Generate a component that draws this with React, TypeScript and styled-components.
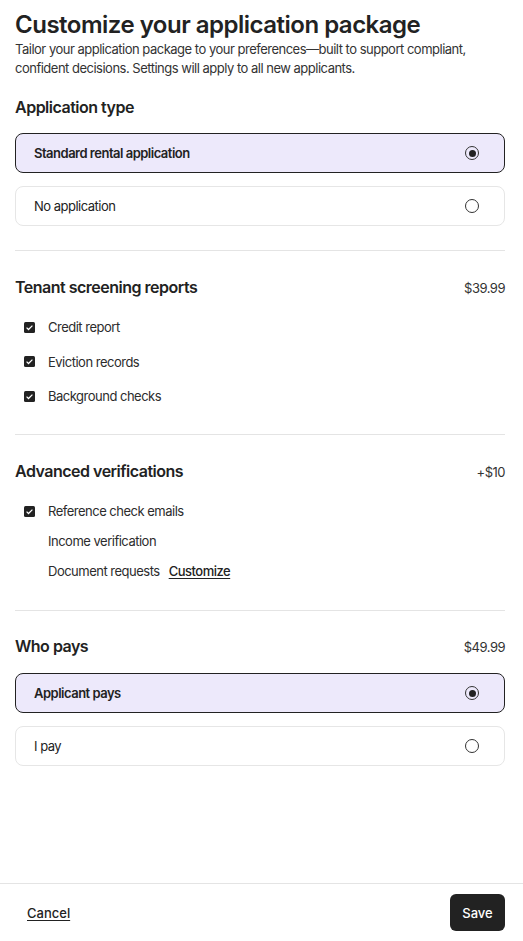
import styled, { createGlobalStyle } from "styled-components";

const GlobalStyle = createGlobalStyle`
  html, body {
    margin: 0;
    padding: 0;
    background: #fff;
  }
  body {
    font-family: Inter, "Noto Sans", sans-serif;
    color: #222;
    letter-spacing: -0.5px;
  }
`;

const Page = styled.div`
  display: flex;
  flex-direction: column;
  min-height: 100vh;
`;

const Content = styled.main`
  flex: 1;
  padding: 10px 18px 0 15px;
`;

const Title = styled.h1`
  margin: 0;
  font-size: 24px;
  line-height: 30px;
  font-weight: 600;
  color: #222;
`;

const Intro = styled.p`
  margin: 0;
  font-size: 13px;
  line-height: 19px;
  color: #333;
`;

const Section = styled.section<{ $top?: number; $bottom?: number }>`
  padding: ${(p) => p.$top ?? 25}px 0 ${(p) => p.$bottom ?? 24}px;
  border-bottom: 1px solid #e4e4e4;

  &:last-child {
    border-bottom: none;
  }
`;

const SectionHead = styled.div<{ $space?: number }>`
  display: flex;
  justify-content: space-between;
  align-items: baseline;
  margin-bottom: ${(p) => p.$space ?? 15}px;
`;

const SectionTitle = styled.h2`
  margin: 0;
  font-size: 16px;
  line-height: 22px;
  font-weight: 600;
  color: #222;
`;

const Price = styled.span`
  font-size: 13px;
  color: #333;
`;

const OptionList = styled.div`
  display: flex;
  flex-direction: column;
  gap: 13px;
`;

const Option = styled.label<{ $selected?: boolean }>`
  display: flex;
  align-items: center;
  justify-content: space-between;
  height: 40px;
  box-sizing: border-box;
  padding: 0 25px 0 18px;
  border-radius: 8px;
  border: 1px solid ${(p) => (p.$selected ? "#222" : "#e6e6e6")};
  background: ${(p) => (p.$selected ? "#ede9fb" : "#fff")};
  font-size: 13px;
  font-weight: ${(p) => (p.$selected ? 600 : 400)};
  color: #222;
`;

const Radio = styled.span<{ $checked?: boolean }>`
  width: 14px;
  height: 14px;
  box-sizing: border-box;
  border-radius: 50%;
  border: 1.5px solid #333;
  display: flex;
  align-items: center;
  justify-content: center;

  &::after {
    content: "";
    display: ${(p) => (p.$checked ? "block" : "none")};
    width: 7px;
    height: 7px;
    border-radius: 50%;
    background: #222;
  }
`;

const CheckList = styled.div<{ $gap: number }>`
  display: flex;
  flex-direction: column;
  gap: ${(p) => p.$gap}px;
  padding-left: 9px;
`;

const CheckRow = styled.div`
  display: flex;
  align-items: center;
  gap: 13px;
  font-size: 13px;
  line-height: 16px;
  color: #2c2c2c;
`;

const Box = styled.span<{ $checked?: boolean }>`
  width: 11px;
  height: 11px;
  border-radius: 1.5px;
  background: ${(p) => (p.$checked ? "#222" : "transparent")};
  display: flex;
  align-items: center;
  justify-content: center;
  flex-shrink: 0;
`;

const LinkText = styled.a`
  margin-left: 9px;
  color: #222;
  font-weight: 500;
  text-decoration: underline;
  text-underline-offset: 2px;
  cursor: pointer;
`;

const Footer = styled.footer`
  display: flex;
  align-items: center;
  justify-content: space-between;
  height: 57px;
  padding: 0 18px 0 27px;
  border-top: 1px solid #e4e4e4;
`;

const CancelButton = styled.button`
  border: none;
  background: none;
  padding: 0;
  font-family: inherit;
  letter-spacing: 0;
  font-size: 13px;
  font-weight: 500;
  color: #222;
  text-decoration: underline;
  text-underline-offset: 2px;
  cursor: pointer;
`;

const SaveButton = styled.button`
  border: none;
  background: #222;
  color: #fff;
  font-family: inherit;
  letter-spacing: 0;
  font-size: 13px;
  font-weight: 500;
  width: 55px;
  height: 37px;
  border-radius: 6px;
  cursor: pointer;
`;

const Check = ({ checked }: { checked?: boolean }) => (
  <Box $checked={checked}>
    {checked && (
      <svg width="9" height="9" viewBox="0 0 8 8">
        <path d="M1.4 4.1 3.1 5.8 6.6 2.3" fill="none" stroke="#fff" strokeWidth="1.1" />
      </svg>
    )}
  </Box>
);

const App = () => {
  return (
    <Page>
      <GlobalStyle />
      <Content>
        <Title>Customize your application package</Title>
        <Intro>
          Tailor your application package to your preferences—built to support compliant,
          confident decisions. Settings will apply to all new applicants.
        </Intro>

        <Section $top={18}>
          <SectionHead>
            <SectionTitle>Application type</SectionTitle>
          </SectionHead>
          <OptionList>
            <Option $selected>
              Standard rental application
              <Radio $checked />
            </Option>
            <Option>
              No application
              <Radio />
            </Option>
          </OptionList>
        </Section>

        <Section $bottom={30}>
          <SectionHead $space={21}>
            <SectionTitle>Tenant screening reports</SectionTitle>
            <Price>$39.99</Price>
          </SectionHead>
          <CheckList $gap={18.5}>
            <CheckRow>
              <Check checked />
              Credit report
            </CheckRow>
            <CheckRow>
              <Check checked />
              Eviction records
            </CheckRow>
            <CheckRow>
              <Check checked />
              Background checks
            </CheckRow>
          </CheckList>
        </Section>

        <Section $bottom={31}>
          <SectionHead $space={21}>
            <SectionTitle>Advanced verifications</SectionTitle>
            <Price>+$10</Price>
          </SectionHead>
          <CheckList $gap={14}>
            <CheckRow>
              <Check checked />
              Reference check emails
            </CheckRow>
            <CheckRow>
              <Check />
              Income verification
            </CheckRow>
            <CheckRow>
              <Check />
              <span>
                Document requests
                <LinkText>Customize</LinkText>
              </span>
            </CheckRow>
          </CheckList>
        </Section>

        <Section $top={24}>
          <SectionHead $space={16}>
            <SectionTitle>Who pays</SectionTitle>
            <Price>$49.99</Price>
          </SectionHead>
          <OptionList>
            <Option $selected>
              Applicant pays
              <Radio $checked />
            </Option>
            <Option>
              I pay
              <Radio />
            </Option>
          </OptionList>
        </Section>
      </Content>
      <Footer>
        <CancelButton>Cancel</CancelButton>
        <SaveButton>Save</SaveButton>
      </Footer>
    </Page>
  );
};

export default App;
